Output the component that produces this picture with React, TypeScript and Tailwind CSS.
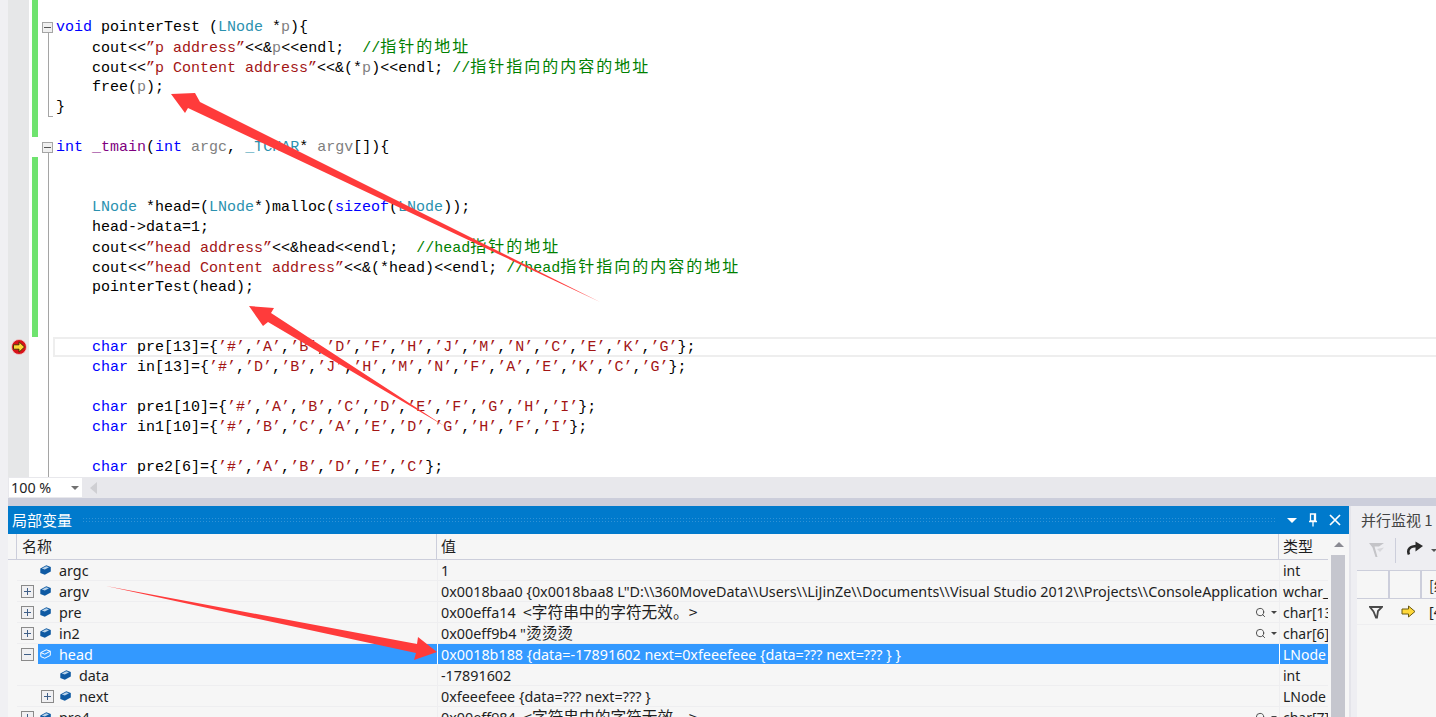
import React from "react";
import { Search } from "lucide-react";

const K = ({ children }: { children: React.ReactNode }) => <span className="text-[#0000ff]">{children}</span>;
const Ty = ({ children }: { children: React.ReactNode }) => <span className="text-[#2b91af]">{children}</span>;
const S = ({ children }: { children: React.ReactNode }) => <span className="text-[#a31515]">{children}</span>;
const P = ({ children }: { children: React.ReactNode }) => <span className="text-[#808080]">{children}</span>;
const F = ({ children }: { children: React.ReactNode }) => <span className="text-[#800080]">{children}</span>;
const C = ({ children }: { children: React.ReactNode }) => <span className="text-[#008000]">{children}</span>;
const Z = ({ children }: { children: React.ReactNode }) => (
  <span className="font-['Noto_Sans_CJK_SC',sans-serif] text-[16px] tracking-[2px] leading-none">{children}</span>
);

type Outline = "box" | "line" | "end" | "none";
type Line = { green: boolean; outline: Outline; code?: React.ReactNode; current?: boolean; marker?: boolean };

const I = "    ";
const lines: Line[] = [
  { green: true, outline: "box", code: <><K>void</K> pointerTest (<Ty>LNode</Ty> *<P>p</P>){"{"}</> },
  { green: true, outline: "line", code: <>{I}cout{"<<"}<S>”p address”</S>{"<<"}&amp;<P>p</P>{"<<"}endl;  <C>//<Z>指针的地址</Z></C></> },
  { green: true, outline: "line", code: <>{I}cout{"<<"}<S>”p Content address”</S>{"<<"}&amp;(*<P>p</P>){"<<"}endl; <C>//<Z>指针指向的内容的地址</Z></C></> },
  { green: true, outline: "line", code: <>{I}free(<P>p</P>);</> },
  { green: true, outline: "end", code: <>{"}"}</> },
  { green: true, outline: "none" },
  { green: false, outline: "box", code: <><K>int</K> <F>_tmain</F>(<K>int</K> <P>argc</P>, <Ty>_TCHAR</Ty>* <P>argv</P>[]){"{"}</> },
  { green: true, outline: "line" },
  { green: true, outline: "line" },
  { green: true, outline: "line", code: <>{I}<Ty>LNode</Ty> *head=(<Ty>LNode</Ty>*)malloc(<K>sizeof</K>(<Ty>LNode</Ty>));</> },
  { green: true, outline: "line", code: <>{I}head-&gt;data=1;</> },
  { green: true, outline: "line", code: <>{I}cout{"<<"}<S>”head address”</S>{"<<"}&amp;head{"<<"}endl;  <C>//head<Z>指针的地址</Z></C></> },
  { green: true, outline: "line", code: <>{I}cout{"<<"}<S>”head Content address”</S>{"<<"}&amp;(*head){"<<"}endl; <C>//head<Z>指针指向的内容的地址</Z></C></> },
  { green: true, outline: "line", code: <>{I}pointerTest(head);</> },
  { green: true, outline: "line" },
  { green: true, outline: "line" },
  { green: false, outline: "line", current: true, marker: true, code: <>{I}<K>char</K> pre[13]={"{"}<S>’#’</S>,<S>’A’</S>,<S>’B’</S>,<S>’D’</S>,<S>’F’</S>,<S>’H’</S>,<S>’J’</S>,<S>’M’</S>,<S>’N’</S>,<S>’C’</S>,<S>’E’</S>,<S>’K’</S>,<S>’G’</S>{"};"}</> },
  { green: false, outline: "line", code: <>{I}<K>char</K> in[13]={"{"}<S>’#’</S>,<S>’D’</S>,<S>’B’</S>,<S>’J’</S>,<S>’H’</S>,<S>’M’</S>,<S>’N’</S>,<S>’F’</S>,<S>’A’</S>,<S>’E’</S>,<S>’K’</S>,<S>’C’</S>,<S>’G’</S>{"};"}</> },
  { green: false, outline: "line" },
  { green: false, outline: "line", code: <>{I}<K>char</K> pre1[10]={"{"}<S>’#’</S>,<S>’A’</S>,<S>’B’</S>,<S>’C’</S>,<S>’D’</S>,<S>’E’</S>,<S>’F’</S>,<S>’G’</S>,<S>’H’</S>,<S>’I’</S>{"};"}</> },
  { green: false, outline: "line", code: <>{I}<K>char</K> in1[10]={"{"}<S>’#’</S>,<S>’B’</S>,<S>’C’</S>,<S>’A’</S>,<S>’E’</S>,<S>’D’</S>,<S>’G’</S>,<S>’H’</S>,<S>’F’</S>,<S>’I’</S>{"};"}</> },
  { green: false, outline: "line" },
  { green: false, outline: "line", code: <>{I}<K>char</K> pre2[6]={"{"}<S>’#’</S>,<S>’A’</S>,<S>’B’</S>,<S>’D’</S>,<S>’E’</S>,<S>’C’</S>{"};"}</> },
];

function OutlineCell({ kind }: { kind: Outline }) {
  if (kind === "box")
    return (
      <div className="w-[14px] h-5 shrink-0 flex flex-col">
        <div className="h-[5px]" />
        <div className="ml-[3px] w-[11px] h-[11px] border border-[#a5a5a5] bg-[#f0f0f0] flex items-center justify-center">
          <div className="w-[7px] h-px bg-[#555555]" />
        </div>
        <div className="ml-[9px] w-px flex-1 bg-[#a5a5a5]" />
      </div>
    );
  if (kind === "line")
    return (
      <div className="w-[14px] h-5 shrink-0">
        <div className="ml-[9px] w-px h-full bg-[#a5a5a5]" />
      </div>
    );
  if (kind === "end")
    return (
      <div className="w-[14px] h-5 shrink-0">
        <div className="ml-[9px] w-[5px] h-full border-l border-b border-[#a5a5a5]" />
      </div>
    );
  return <div className="w-[14px] h-5 shrink-0" />;
}

function BreakpointMark() {
  return (
    <svg width="16" height="16" viewBox="0 0 16 16">
      <circle cx="8" cy="8" r="7.5" fill="#d8131a" stroke="#f0d0d0" strokeWidth="0.8" />
      <path d="M2.5 5.8H8V2.8L13.5 8L8 13.2V10.2H2.5Z" fill="#ffd83a" stroke="#3c3000" strokeWidth="0.9" />
    </svg>
  );
}

function CodeRow({ l }: { l: Line }) {
  return (
    <div className="flex h-5 shrink-0">
      <div className="w-[21px] shrink-0 bg-[#e6e7e8] flex items-center justify-center pl-[1px]">
        {l.marker && <BreakpointMark />}
      </div>
      <div className="w-[3px] shrink-0" />
      <div className={l.green ? "w-[6px] shrink-0 bg-[#6fe36f]" : "w-[6px] shrink-0"} />
      <div className="w-[1px] shrink-0" />
      <OutlineCell kind={l.outline} />
      <div
        className={
          l.current
            ? "flex-1 pl-[1px] whitespace-pre border-y-2 border-l-2 border-[#eeeeee] leading-[18px]"
            : "flex-1 pl-[3px] whitespace-pre leading-[22px]"
        }
      >
        {l.code}
      </div>
    </div>
  );
}

function Cube({ white }: { white?: boolean }) {
  return (
    <svg width="11" height="10" viewBox="0 0 11 10" className="shrink-0">
      {white ? (
        <>
          <path d="M0.8 3.6L6.3 0.8L10.3 2.2V6.4L4.8 9.2L0.8 7.6Z" fill="#3399ff" stroke="#ffffff" strokeWidth="1" />
          <path d="M0.8 3.6L4.8 5.2L10.3 2.2" fill="none" stroke="#ffffff" strokeWidth="1" />
        </>
      ) : (
        <>
          <path d="M0.3 3.4L6.3 0.2L10.8 2V6.6L4.8 9.8L0.3 8Z" fill="#0f5aa3" />
          <path d="M1.8 3.5L6.2 1.2L9 2.3L4.8 4.6Z" fill="#b9d3ea" />
        </>
      )}
    </svg>
  );
}

function Expander({ open }: { open?: boolean }) {
  return (
    <div className="w-[13px] h-[13px] border border-[#8a8a8a] bg-[#f0f0f2] relative shrink-0">
      <div className="absolute left-[2px] top-[5px] w-[7px] h-px bg-[#3f5f88]" />
      {!open && <div className="absolute left-[5px] top-[2px] w-px h-[7px] bg-[#3f5f88]" />}
    </div>
  );
}

type Row = {
  name: string;
  value: React.ReactNode;
  type: string;
  depth?: number;
  exp?: "plus" | "minus";
  sel?: boolean;
  viz?: boolean;
};

const Cjk = ({ children }: { children: React.ReactNode }) => (
  <span className="font-['Noto_Sans_CJK_SC',sans-serif] text-[15.7px] leading-none">{children}</span>
);

const rows: Row[] = [
  { name: "argc", value: "1", type: "int" },
  {
    name: "argv",
    value:
      '0x0018baa0 {0x0018baa8 L"D:\\\\360MoveData\\\\Users\\\\LiJinZe\\\\Documents\\\\Visual Studio 2012\\\\Projects\\\\ConsoleApplication',
    type: "wchar_t**",
    exp: "plus",
  },
  { name: "pre", value: <>0x00effa14 &nbsp;<Cjk>&lt;字符串中的字符无效。&gt;</Cjk></>, type: "char[13]", exp: "plus", viz: true },
  { name: "in2", value: <>0x00eff9b4 "<Cjk>烫烫烫</Cjk></>, type: "char[6]", exp: "plus", viz: true },
  { name: "head", value: "0x0018b188 {data=-17891602 next=0xfeeefeee {data=??? next=??? } }", type: "LNode", exp: "minus", sel: true },
  { name: "data", value: "-17891602", type: "int", depth: 1 },
  { name: "next", value: "0xfeeefeee {data=??? next=??? }", type: "LNode", depth: 1, exp: "plus" },
  { name: "pre4", value: <>0x00eff984 &nbsp;<Cjk>&lt;字符串中的字符无效。&gt;</Cjk></>, type: "char[7]", exp: "plus", viz: true },
];

function LocalRow({ r }: { r: Row }) {
  const indent = r.depth ? "w-[41px]" : "w-[21px]";
  return (
    <div className={r.sel ? "flex h-[21px] shrink-0 text-white" : "flex h-[21px] shrink-0 text-[#1e1e1e]"}>
      <div className="w-[9px] shrink-0" />
      <div className={r.sel ? "flex flex-1 min-w-0 h-[20px]" : "flex flex-1 min-w-0 border-b border-[#eeeef0]"}>
        <div className={`${indent} shrink-0 flex items-center ${r.depth ? "pl-[24px]" : "pl-[4px]"}`}>
          {r.exp && <Expander open={r.exp === "minus"} />}
        </div>
        <div className={r.sel ? "flex-1 bg-[#3399ff] flex items-center pl-[2px] gap-[8px]" : "flex-1 flex items-center pl-[2px] gap-[8px]"}>
          <Cube white={r.sel} />
          <span className="leading-[20px] pt-[2px]">{r.name}</span>
        </div>
        <div className={r.sel ? "w-[842px] shrink-0 border-l border-white bg-[#3399ff] flex items-center pl-[3px]" : "w-[842px] shrink-0 border-l border-[#eeeef0] flex items-center pl-[3px]"}>
          <span className="flex-1 min-w-0 overflow-hidden whitespace-pre leading-[20px] pt-[2px]">{r.value}</span>
          {r.viz && (
            <span className="flex items-center gap-[5px] pr-[2px] shrink-0">
              <Search size={11} strokeWidth={2} className="text-[#444444]" />
              <span className="w-0 h-0 border-x-[3px] border-x-transparent border-t-[3px] border-t-[#444444]" />
            </span>
          )}
        </div>
        <div className={r.sel ? "w-[49px] shrink-0 border-l border-white bg-[#3399ff] pl-[3px] overflow-hidden whitespace-pre leading-[22px] text-[14px]" : "w-[49px] shrink-0 border-l border-[#eeeef0] pl-[3px] overflow-hidden whitespace-pre leading-[22px] text-[14px]"}>
          {r.type}
        </div>
      </div>
    </div>
  );
}

function Arrows() {
  return (
    <svg width="1436" height="717" viewBox="0 0 1436 717" className="absolute left-0 top-0 pointer-events-none">
      <polygon points="171,94 195,93 200,102 600,302 188,108 185,113" fill="#ff3b3b" />
      <polygon points="249,306 274,308 271,313 446,427 268,322 263,326" fill="#ff3b3b" />
      <polygon points="106,586 417,644 418,637 437,652 414,660 416,653" fill="#ff3b3b" />
    </svg>
  );
}

export default function App() {
  return (
    <div className="relative w-[1436px] h-[717px] overflow-hidden bg-[#f0f0f3] pl-2 font-['Noto_Sans','Noto_Sans_CJK_SC',sans-serif] text-[14.35px]">
      <div className="flex flex-col h-full">
        {/* editor */}
        <div className="h-[477px] shrink-0 bg-white flex flex-col overflow-hidden font-['Liberation_Mono','Noto_Sans_CJK_SC',monospace] text-[15px] text-black">
          <div className="flex h-[17px] shrink-0">
            <div className="w-[21px] bg-[#e6e7e8]" />
            <div className="w-[3px]" />
            <div className="w-[6px] bg-[#6fe36f]" />
          </div>
          {lines.map((l, i) => (
            <CodeRow key={i} l={l} />
          ))}
        </div>

        {/* zoom bar */}
        <div className="h-[21px] shrink-0 bg-[#e8e8ec] flex items-center">
          <div className="ml-[1px] w-[73px] h-[19px] bg-white flex items-center pl-[2px] pr-[3px] pt-[1px] justify-between text-[#1e1e1e] leading-none">
            <span>100 %</span>
            <span className="w-0 h-0 border-x-[4px] border-x-transparent border-t-[4px] border-t-[#717171]" />
          </div>
          <span className="ml-[8px] w-0 h-0 border-y-[6px] border-y-transparent border-r-[7px] border-r-[#cfcfd3]" />
        </div>

        {/* splitter */}
        <div className="h-2 shrink-0 bg-[#cccedb]" />

        {/* bottom */}
        <div className="flex flex-1 min-h-0">
          <div className="w-[1341px] shrink-0 flex flex-col bg-[#f6f6f6]">
            <div className="h-[28px] shrink-0 bg-[#007acc] flex items-center text-white pl-[4px] font-['Noto_Sans_CJK_SC',sans-serif] text-[15px]">
              <span className="w-[70px] shrink-0">局部变量</span>
              <div className="w-[1194px] shrink-0 h-[6px] bg-[radial-gradient(#2f92d6_1px,transparent_1px)] bg-[length:3px_3px]" />
              <div className="flex items-center ml-[11px]">
                <span className="w-0 h-0 border-x-[5px] border-x-transparent border-t-[5px] border-t-white" />
                <svg width="10" height="14" viewBox="0 0 10 14" className="ml-[11px]">
                  <path d="M2.5 1H7.5V8H2.5ZM1 8.5H9M5 8.5V13.5M6.5 1V8" fill="none" stroke="#ffffff" strokeWidth="1.3" />
                </svg>
                <svg width="12" height="12" viewBox="0 0 12 12" className="ml-[11px]">
                  <path d="M1 1L11 11M11 1L1 11" stroke="#ffffff" strokeWidth="1.7" />
                </svg>
              </div>
            </div>
            <div className="flex flex-1 min-h-0">
              <div className="w-[1320px] shrink-0 flex flex-col">
                <div className="h-[26px] shrink-0 flex border-b border-[#cccedb] text-[#1e1e1e] leading-[24px] font-['Noto_Sans_CJK_SC',sans-serif] text-[15px]">
                  <div className="w-[9px] shrink-0 border-r border-[#cccedb]" />
                  <div className="w-[420px] shrink-0 border-r border-[#cccedb] pl-[5px]">名称</div>
                  <div className="w-[842px] shrink-0 border-r border-[#cccedb] pl-[4px]">值</div>
                  <div className="flex-1 pl-[4px]">类型</div>
                </div>
                {rows.map((r) => (
                  <LocalRow key={r.name} r={r} />
                ))}
              </div>
              <div className="w-[21px] shrink-0 flex flex-col pl-[3px]">
                <div className="h-[21px] shrink-0 flex items-center justify-center w-[15px]">
                  <span className="w-0 h-0 border-x-[5px] border-x-transparent border-b-[5px] border-b-[#8a8a92]" />
                </div>
                <div className="flex-1 w-[14px] bg-[#c5c6ce]" />
              </div>
            </div>
          </div>

          {/* parallel watch */}
          <div className="flex-1 min-w-0 flex flex-col bg-[#eeeef2] border-l-2 border-[#e4e4ea] overflow-hidden">
            <div className="h-[28px] shrink-0 flex items-center pl-[10px] text-[#444444] whitespace-pre font-['Noto_Sans_CJK_SC',sans-serif] text-[15px]">并行监视 1</div>
            <div className="h-[36px] shrink-0 flex items-start pl-[17px] pt-[4px]">
              <svg width="17" height="17" viewBox="0 0 17 17" className="mt-[4px] shrink-0">
                <path d="M1 1H16L11 4.5H6.5L9.5 15L7.5 15L4.5 5.5Z" fill="#c4c4c8" />
                <path d="M9 7L16 5.5L12 10Z" fill="#d8d8dc" />
              </svg>
              <div className="ml-[10px] w-px h-[25px] bg-[#cccedb] shrink-0" />
              <svg width="18" height="16" viewBox="0 0 18 16" className="ml-[10px] mt-[3px] shrink-0">
                <path d="M3 13.5C0.8 8.5 4 5 11 5" fill="none" stroke="#2a2a2a" strokeWidth="2.6" />
                <path d="M9.5 0.5L17 5L9.5 10.5Z" fill="#2a2a2a" />
              </svg>
              <span className="ml-[7px] mt-[11px] w-0 h-0 border-x-[3px] border-x-transparent border-t-[3px] border-t-[#555555] shrink-0" />
            </div>
            <div className="flex-1 ml-[6px] bg-[#f6f6f6] flex flex-col">
              <div className="h-[29px] shrink-0 flex border-y border-[#cccedb]">
                <div className="w-[33px] shrink-0 border-r-2 border-[#cccedb]" />
                <div className="w-[32px] shrink-0 border-r-2 border-[#cccedb]" />
                <div className="pl-[7px] text-[#1e1e1e] whitespace-pre leading-[27px] font-['Noto_Sans_CJK_SC',sans-serif]">[线程]</div>
              </div>
              <div className="h-[26px] shrink-0 flex items-center border-b border-[#eeeef0]">
                <div className="w-[33px] shrink-0 flex justify-center pl-[5px]">
                  <svg width="14" height="14" viewBox="0 0 14 14">
                    <path d="M1 2H13L9 6L8 12.5H7L4.5 6.5Z" fill="none" stroke="#4a4a4a" strokeWidth="1.8" />
                  </svg>
                </div>
                <div className="w-[32px] shrink-0 flex justify-center pl-[4px]">
                  <svg width="15" height="13" viewBox="0 0 15 13">
                    <path d="M1 4H7.5V1L14 6.5L7.5 12V9H1Z" fill="#ffd83a" stroke="#6b5a10" strokeWidth="1" />
                  </svg>
                </div>
                <div className="pl-[7px] text-[#1e1e1e] whitespace-pre">[4</div>
              </div>
            </div>
          </div>
        </div>
      </div>
      <Arrows />
    </div>
  );
}
